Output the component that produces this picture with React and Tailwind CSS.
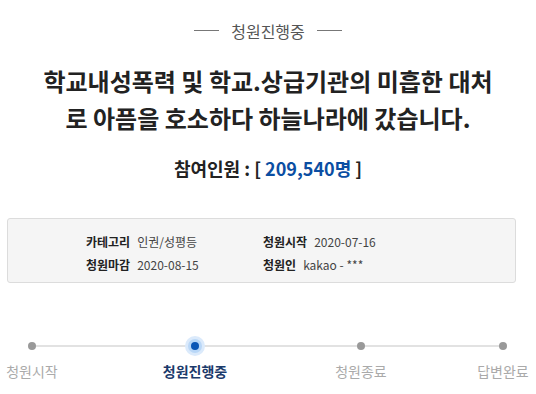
import React from 'react';

const FONT = { fontFamily: '"Noto Sans CJK KR", "Noto Sans", sans-serif' };

const steps = [
  { label: '청원시작', ml: 'ml-0' },
  { label: '청원진행중', ml: 'ml-[99px]', active: true },
  { label: '청원종료', ml: 'ml-[102px]' },
  { label: '답변완료', ml: 'ml-[78px]' },
];

export default function App() {
  return (
    <div className="w-[536px] h-[394px] overflow-hidden bg-white text-[#333]" style={FONT}>
      <div className="flex items-center justify-center gap-[12px] pt-[17px] h-[44px]">
        <span className="block w-[25px] h-px bg-[#777]" />
        <span className="text-[16px] leading-[24px] text-[#555]">청원진행중</span>
        <span className="block w-[25px] h-px bg-[#777]" />
      </div>

      <h1 className="mt-[18px] text-center text-[24px] leading-[37px] font-bold text-[#222]">
        학교내성폭력 및 학교.상급기관의 미흡한 대처
        <br />
        로 아픔을 호소하다 하늘나라에 갔습니다.
      </h1>

      <div className="mt-[18px] text-center text-[18px] leading-[28px] font-bold text-[#222]">
        참여인원 : [ <span className="text-[#0b4ea2]">209,540명</span> ]
      </div>

      <div className="ml-[7px] mt-[36px] w-[509px] h-[65px] rounded-[3px] border border-[#dcdcdc] bg-[#f5f5f5] pl-[78px] pt-[13px]">
        <div className="grid grid-cols-[177px_1fr] gap-y-[4px] text-[12px] leading-[19px] text-[#444]">
          <div className="flex gap-[7px]"><b className="text-[#222]">카테고리</b><span>인권/성평등</span></div>
          <div className="flex gap-[7px]"><b className="text-[#222]">청원시작</b><span>2020-07-16</span></div>
          <div className="flex gap-[7px]"><b className="text-[#222]">청원마감</b><span>2020-08-15</span></div>
          <div className="flex gap-[7px]"><b className="text-[#222]">청원인</b><span>kakao - ***</span></div>
        </div>
      </div>

      <div className="relative mt-[52px]">
        <div className="absolute left-[32px] top-[10px] w-[471px] h-[2px] bg-[#e2e2e2]" />
        <div className="relative flex">
          {steps.map(s => (
            <div key={s.label} className={`${s.ml} w-[64px] flex flex-col items-center`}>
              <div className="h-[22px] flex items-center justify-center">
                {s.active ? (
                  <span className="flex items-center justify-center w-[20px] h-[20px] rounded-full bg-[#dbeafb]">
                    <span className="flex items-center justify-center w-[14px] h-[14px] rounded-full bg-[#b9d7f7]">
                      <span className="block w-[8px] h-[8px] rounded-full bg-[#0a56b5]" />
                    </span>
                  </span>
                ) : (
                  <span className="block w-[8px] h-[8px] rounded-full bg-[#999]" />
                )}
              </div>
              <div
                className={`mt-[3px] whitespace-nowrap text-[14px] leading-[22px] ${
                  s.active ? 'font-bold text-[#1b3a6b]' : 'text-[#aaa]'
                }`}
              >
                {s.label}
              </div>
            </div>
          ))}
        </div>
      </div>
    </div>
  );
}
